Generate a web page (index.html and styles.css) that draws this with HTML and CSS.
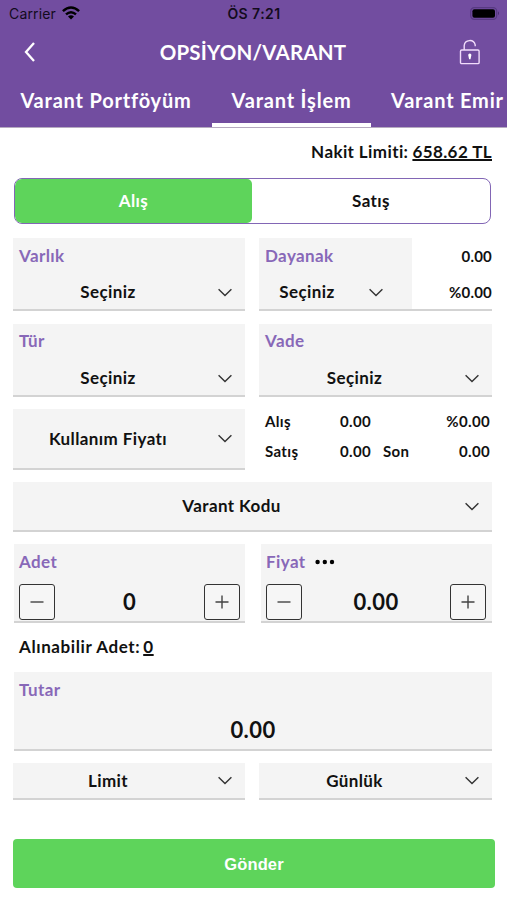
FILE: index.html
```html
<!DOCTYPE html>
<html lang="tr">
<head>
<meta charset="utf-8">
<title>Opsiyon/Varant</title>
<link rel="stylesheet" href="styles.css">
</head>
<body>
<svg class="defs" width="0" height="0"><defs>
<symbol id="chevron" viewBox="0 0 14 9"><path d="M.6 1.2 7 7.6 13.4 1.2" fill="none" stroke="#333" stroke-width="1.4"/></symbol>
<symbol id="minus" viewBox="0 0 14 14"><path d="M.5 7h13" fill="none" stroke="#444" stroke-width="1.4"/></symbol>
<symbol id="plus" viewBox="0 0 14 14"><path d="M.5 7h13M7 .5v13" fill="none" stroke="#444" stroke-width="1.4"/></symbol>
</defs></svg>
<header class="top">
  <div class="status">
    <div class="carrier"><span>Carrier</span>
      <svg width="18" height="14" viewBox="0 0 18 14"><g fill="none" stroke="#000" stroke-width="2.5"><path d="M.9 5.2Q9-2.2 17.1 5.2"/><path d="M4 8.4Q9 4 14 8.4"/></g><path d="M6 10.5Q9 8.1 12 10.5L9 13.4Z"/></svg>
    </div>
    <span class="time">ÖS 7:21</span>
    <svg class="battery" width="30" height="13" viewBox="0 0 30 13"><rect x=".7" y=".7" width="26" height="11.6" rx="3.6" fill="none" stroke="#583a82" stroke-width="1.2"/><rect x="2.4" y="2.2" width="22.6" height="8.6" rx="2"/><path d="M28 4.3q2 2 0 4z" fill="#4a2f72"/></svg>
  </div>
  <div class="nav">
    <svg class="back" width="12" height="20" viewBox="0 0 12 20"><path d="M11 1 3 10l8 9" fill="none" stroke="#fff" stroke-width="2.3"/></svg>
    <h1>OPSİYON/VARANT</h1>
    <svg class="lock" width="22" height="26" viewBox="0 0 22 26"><g fill="none" stroke="#f1dcfb" stroke-width="1.4"><rect x="1.5" y="11" width="18.6" height="13.6" rx="1.2"/><path d="M5.2 11V6.6a5.6 5.6 0 0 1 11-.8v1.5"/></g><path d="M9.3 16.6a1.6 1.6 0 1 1 3 0l-.8 3.6h-1.4z" fill="#fff"/></svg>
  </div>
  <nav class="tabs">
    <a class="tab tab-a">Varant Portföyüm</a><a class="tab tab-b active">Varant İşlem</a><a class="tab tab-c">Varant Emir</a>
  </nav>
</header>
<main>
  <div class="cash"><span>Nakit Limiti:</span> <u>658.62 TL</u></div>
  <div class="segment"><div class="buy">Alış</div><div class="sell">Satış</div></div>

  <div class="row r-a">
    <div class="field"><label class="label">Varlık</label><div class="select"><span>Seçiniz</span><svg class="chev"><use href="#chevron"/></svg></div></div>
    <div class="field underlying">
      <div class="pick"><label class="label">Dayanak</label><div class="select"><span>Seçiniz</span><svg class="chev"><use href="#chevron"/></svg></div></div>
      <div class="values"><span>0.00</span><span>%0.00</span></div>
    </div>
  </div>
  <div class="row r-b">
    <div class="field"><label class="label">Tür</label><div class="select"><span>Seçiniz</span><svg class="chev"><use href="#chevron"/></svg></div></div>
    <div class="field"><label class="label">Vade</label><div class="select"><span>Seçiniz</span><svg class="chev"><use href="#chevron"/></svg></div></div>
  </div>
  <div class="row r-c">
    <div class="field single"><div class="select"><span>Kullanım Fiyatı</span><svg class="chev"><use href="#chevron"/></svg></div></div>
    <div class="quotes">
      <span>Alış</span><span class="num">0.00</span><span></span><span class="num">%0.00</span>
      <span>Satış</span><span class="num">0.00</span><span class="last">Son</span><span class="num">0.00</span>
    </div>
  </div>
  <div class="field single r-d"><div class="select"><span>Varant Kodu</span><svg class="chev"><use href="#chevron"/></svg></div></div>
  <div class="row r-e">
    <div class="field qty"><label class="label">Adet</label>
      <div class="stepper"><button><svg><use href="#minus"/></svg></button><span>0</span><button><svg><use href="#plus"/></svg></button></div></div>
    <div class="field price"><label class="label">Fiyat <svg class="dots" width="20" height="6" viewBox="0 0 20 6"><circle cx="2.6" cy="3" r="2.2"/><circle cx="9.8" cy="3" r="2.2"/><circle cx="17" cy="3" r="2.2"/></svg></label>
      <div class="stepper"><button><svg><use href="#minus"/></svg></button><span>0.00</span><button><svg><use href="#plus"/></svg></button></div></div>
  </div>
  <div class="available"><span>Alınabilir Adet:</span><u>0</u></div>
  <div class="field total"><label class="label">Tutar</label><div class="amount">0.00</div></div>
  <div class="row r-f">
    <div class="field single"><div class="select"><span>Limit</span><svg class="chev"><use href="#chevron"/></svg></div></div>
    <div class="field single"><div class="select"><span>Günlük</span><svg class="chev"><use href="#chevron"/></svg></div></div>
  </div>
  <button class="send">Gönder</button>
</main>
</body>
</html>
```
FILE: styles.css
```css
* { box-sizing: border-box; }
body { margin: 0; width: 507px; height: 900px; overflow: hidden; background: #fff; color: #111; font: 700 17px/20px Lato, "Open Sans", sans-serif; letter-spacing: .4px; }
.defs { display: block; height: 0; }
.top { height: 128px; background: #724da0; border-bottom: 1px solid #b5aabf; color: #fff; overflow: hidden; }
.status { height: 28px; padding: 0 7px 0 9px; display: grid; grid-template-columns: 1fr auto 1fr; align-items: center; color: #130b1d; font: 400 14px/28px Inter, sans-serif; letter-spacing: .15px; }
.carrier { display: flex; align-items: center; gap: 6px; }
.carrier svg { margin-top: -2px; }
.time { font-weight: 600; letter-spacing: .45px; margin-right: 1px; }
.battery { justify-self: end; margin-top: -2px; }
.nav { height: 47px; padding: 0 26px 0 23px; display: grid; grid-template-columns: 1fr auto 1fr; align-items: center; }
.nav h1 { margin: 0 0 0 2px; font-size: 20.5px; line-height: 24px; letter-spacing: .2px; }
.lock { justify-self: end; }
.tabs { height: 52px; display: flex; white-space: nowrap; font-size: 20px; line-height: 51px; letter-spacing: .8px; }
.tab { flex: none; text-align: center; border-bottom: 4px solid transparent; height: 52px; }
.tab-a { width: 212px; }
.tab-b { width: 159px; }
.tab-c { padding-left: 20px; }
.tab.active { border-color: #fff; }
main { padding: 14px 12px 0 13px; }
.cash { height: 20px; display: flex; justify-content: flex-end; gap: 4px; padding-right: 3px; }
u { text-decoration-thickness: 2px; text-underline-offset: 1px; text-decoration-skip-ink: none; }
.segment { margin: 16px 0 0 1px; width: 477px; height: 46px; border: 1.5px solid #8266b5; border-radius: 8px; display: flex; line-height: 44px; text-align: center; overflow: hidden; }
.buy { width: 237px; background: #5ed45b; color: #fff; border-radius: 6px 5px 5px 6px; }
.sell { flex: 1; }
.row { width: 479px; display: grid; grid-template-columns: 232px 233px; gap: 14px; }
.field { background: #f4f4f4; border-bottom: 2px solid #d3d3d3; }
.label { display: flex; align-items: center; height: 20px; margin: 8px 6px 0; color: #8868b8; }
.select { display: grid; grid-template-columns: 1fr 14px; align-items: center; height: 20px; padding-right: 13px; text-align: center; }
.select span { padding-left: 9px; margin-right: 24px; }
.r-a .select { margin-top: 16px; }
.r-b .select { margin-top: 17px; }
.chev { width: 14px; height: 9px; }
.r-a { margin-top: 14px; height: 73px; }
.underlying { display: flex; background: #fff; }
.pick { width: 153px; background: #f4f4f4; }
.pick .select { padding-right: 29px; }
.pick .select span { margin-right: 15px; padding-left: 1px; }
.values { flex: 1; display: flex; flex-direction: column; text-align: right; padding-top: 8px; gap: 16px; font-size: 15px; letter-spacing: .2px; }
.r-b { margin-top: 13px; height: 73px; }
.r-b .label { margin-top: 7px; }
.r-c { margin-top: 12px; height: 61px; }
.single { display: flex; flex-direction: column; justify-content: center; }
.quotes { display: grid; grid-template-columns: 52px 54px 64px 55px; grid-template-rows: 30px 30px; margin-left: 6px; margin-top: -3px; align-items: center; font-size: 15px; letter-spacing: .35px; }
.num { text-align: right; }
.last { padding-left: 12px; }
.r-d { width: 479px; margin-top: 12px; height: 50px; }
.r-e { margin-top: 12px; height: 79px; }
.qty { margin-left: 1px; }
.price { margin-left: 2px; }
.r-e .label { margin: 8px 5px 0; }
.stepper { display: flex; justify-content: space-between; align-items: center; margin: 12px 5px 0; font-size: 22px; }
.price .stepper { margin-right: 6px; }
.stepper button { width: 36px; height: 36px; padding: 0; border: 1.5px solid #333; border-radius: 3px; background: #f6f6f6; display: grid; place-items: center; }
.stepper svg { width: 14px; height: 14px; }
.dots { margin-left: 9px; }
.available { margin: 14px 0 0 6px; height: 20px; display: flex; gap: 3px; letter-spacing: .6px; }
.total { width: 478px; margin: 15px 0 0 1px; height: 79px; padding-top: .1px; }
.total .label { margin-left: 5px; }
.amount { text-align: center; font-size: 22px; line-height: 26px; margin-top: 17px; }
.r-f { margin-top: 12px; height: 37px; }
.send { display: block; margin: 39px 0 0; width: 482px; height: 49px; border: 0; border-radius: 4px; background: #5ed45b; color: #fff; font: 700 16.5px/48px "Liberation Sans", sans-serif; letter-spacing: .15px; }
```
